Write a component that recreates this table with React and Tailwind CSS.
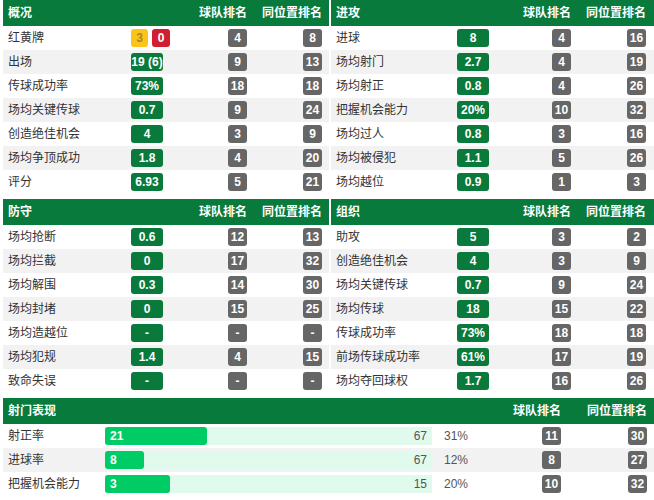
import React from "react";

const FONT = { fontFamily: '"Liberation Sans", "Noto Sans CJK SC", sans-serif' };

const sections = [
  {
    title: "概况",
    rows: [
      ["红黄牌", "cards", "4", "8"],
      ["出场", "19 (6)", "9", "13"],
      ["传球成功率", "73%", "18", "18"],
      ["场均关键传球", "0.7", "9", "24"],
      ["创造绝佳机会", "4", "3", "9"],
      ["场均争顶成功", "1.8", "4", "20"],
      ["评分", "6.93", "5", "21"],
    ],
  },
  {
    title: "进攻",
    rows: [
      ["进球", "8", "4", "16"],
      ["场均射门", "2.7", "4", "19"],
      ["场均射正", "0.8", "4", "26"],
      ["把握机会能力", "20%", "10", "32"],
      ["场均过人", "0.8", "3", "16"],
      ["场均被侵犯", "1.1", "5", "26"],
      ["场均越位", "0.9", "1", "3"],
    ],
  },
  {
    title: "防守",
    rows: [
      ["场均抢断", "0.6", "12", "13"],
      ["场均拦截", "0", "17", "32"],
      ["场均解围", "0.3", "14", "30"],
      ["场均封堵", "0", "15", "25"],
      ["场均造越位", "-", "-", "-"],
      ["场均犯规", "1.4", "4", "15"],
      ["致命失误", "-", "-", "-"],
    ],
  },
  {
    title: "组织",
    rows: [
      ["助攻", "5", "3", "2"],
      ["创造绝佳机会", "4", "3", "9"],
      ["场均关键传球", "0.7", "9", "24"],
      ["场均传球", "18", "15", "22"],
      ["传球成功率", "73%", "18", "18"],
      ["前场传球成功率", "61%", "17", "19"],
      ["场均夺回球权", "1.7", "16", "26"],
    ],
  },
];

const shots = [
  ["射正率", 21, 67, "31%", "11", "30"],
  ["进球率", 8, 67, "12%", "8", "27"],
  ["把握机会能力", 3, 15, "20%", "10", "32"],
];

function Rank({ v }) {
  return (
    <span className="inline-flex h-[18px] w-[19px] items-center justify-center rounded-[3px] bg-[#666666] text-[12px] font-bold leading-none text-white">
      {v}
    </span>
  );
}

function Value({ v }) {
  if (v === "cards") {
    return (
      <div className="flex gap-[4px] whitespace-nowrap">
        <span className="inline-flex h-[18px] w-[17px] items-center justify-center rounded-[3px] bg-[#fcc419] text-[12px] font-bold leading-none text-[#a8842a]">
          3
        </span>
        <span className="inline-flex h-[18px] w-[18px] items-center justify-center rounded-[3px] bg-[#d0202f] text-[12px] font-bold leading-none text-white">
          0
        </span>
      </div>
    );
  }
  return (
    <span className="inline-flex h-[18px] w-[32px] items-center justify-center whitespace-nowrap rounded-[3px] bg-[#0a7a3c] text-[12px] font-bold leading-none text-white">
      {v}
    </span>
  );
}

function Panel({ s, right }) {
  const cols = right
    ? "grid-cols-[126px_32px_82px_75px] pr-[8px]"
    : "grid-cols-[128px_32px_84px_75px] pr-[7px]";
  return (
    <div>
      <div className={`grid h-[26px] items-center bg-[#077a3c] text-[12px] font-bold text-white ${cols}`}>
        <div className="pl-[5px]">{s.title}</div>
        <div />
        <div className="text-right">球队排名</div>
        <div className="text-right">同位置排名</div>
      </div>
      {s.rows.map((r, i) => (
        <div
          key={i}
          className={`grid h-[24px] items-center text-[12px] text-[#333333] ${cols} ${i % 2 === 1 ? "bg-[#f2f2f2]" : "bg-white"}`}
        >
          <div className="whitespace-nowrap pl-[5px]">{r[0]}</div>
          <div className="flex">
            <Value v={r[1]} />
          </div>
          <div className="flex justify-end">
            <Rank v={r[2]} />
          </div>
          <div className="flex justify-end">
            <Rank v={r[3]} />
          </div>
        </div>
      ))}
    </div>
  );
}

export default function App() {
  const cols = "grid-cols-[102px_327px_68px_61px_86px] pr-[7px]";
  return (
    <div className="w-[654px] bg-white pl-[3px]" style={FONT}>
      <div className="grid grid-cols-[326px_323px] gap-x-[2px] gap-y-[5px]">
        {sections.map((s, i) => (
          <Panel key={i} s={s} right={i % 2 === 1} />
        ))}
      </div>
      <div className="mt-[5px] w-[651px]">
        <div className={`grid h-[26px] items-center bg-[#077a3c] text-[12px] font-bold text-white ${cols}`}>
          <div className="pl-[5px]">射门表现</div>
          <div />
          <div />
          <div className="text-right">球队排名</div>
          <div className="text-right">同位置排名</div>
        </div>
        {shots.map((r, i) => (
          <div
            key={i}
            className={`grid h-[24px] items-center text-[12px] text-[#333333] ${cols} ${i % 2 === 1 ? "bg-[#f2f2f2]" : "bg-white"}`}
          >
            <div className="whitespace-nowrap pl-[5px]">{r[0]}</div>
            <div className="relative flex h-[18px] items-center bg-[#e0fbed]">
              <div
                className="flex h-[18px] items-center rounded-[3px] bg-[#00cc66] pl-[5px] text-[12px] font-bold text-white"
                style={{ width: `${(r[1] / r[2]) * 100}%` }}
              >
                {r[1]}
              </div>
              <div className="ml-auto pr-[5px] text-[12px] text-[#555555]">{r[2]}</div>
            </div>
            <div className="pl-[12px] text-[#555555]">{r[3]}</div>
            <div className="flex justify-end">
              <Rank v={r[4]} />
            </div>
            <div className="flex justify-end">
              <Rank v={r[5]} />
            </div>
          </div>
        ))}
      </div>
    </div>
  );
}
